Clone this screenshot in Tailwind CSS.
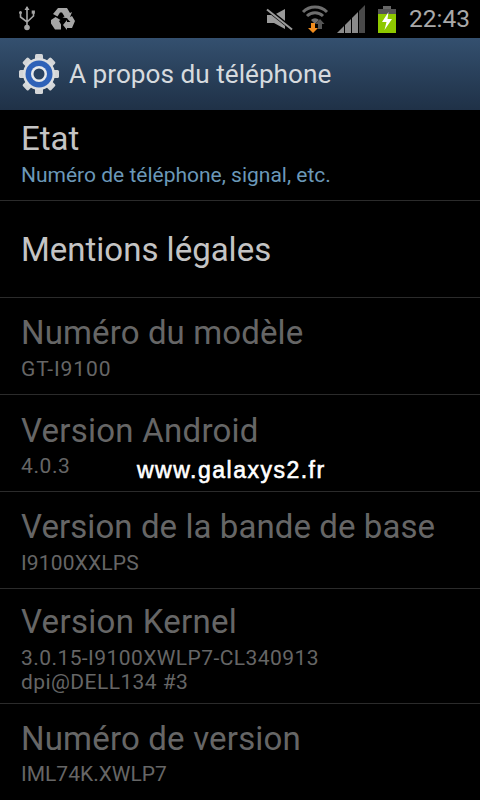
<!DOCTYPE html>
<html lang="fr">
<head>
    <meta charset="UTF-8">
    <title>A propos du téléphone</title>
    <script src="https://cdn.jsdelivr.net/npm/@tailwindcss/browser@4"></script>
</head>
<body class="relative w-[480px] h-[800px] overflow-hidden bg-black font-['Roboto',sans-serif]">

    <!-- Status bar -->
    <div class="h-[38px] flex items-center justify-between bg-black">
        <div class="flex items-center gap-[15px] pl-[19px]">
            <svg width="16" height="26" viewBox="0 0 16 26" fill="none" stroke="#a6a6a6" stroke-width="1.6">
                <path d="M8 1v20M1.5 7v4l6.5 5 6.5-6V7"/>
                <path d="M8 0l-2.5 4h5z" fill="#a6a6a6" stroke="none"/>
                <circle cx="8" cy="21.5" r="2.8" fill="#a6a6a6" stroke="none"/>
                <circle cx="1.5" cy="6.5" r="1.5" fill="#a6a6a6" stroke="none"/>
                <rect x="12.7" y="4.5" width="3.2" height="3.2" fill="#a6a6a6" stroke="none"/>
            </svg>
            <svg width="26" height="24" viewBox="0 0 26 24" fill="#a6a6a6">
                <path d="M8 1h9l3 5 2-1-2.500 6.500-7-1 2-1-2.500-4-2 0-2.500 4-4.500-2.500z"/>
                <path d="M1 13l4.500-3 5 3-1.500 1 2 3.500v5h-6l-4-6z"/>
                <path d="M25 14l-3-5-5 2.500 3.500 3.500-3.500 0v-2l-4 5 4 5v-2h5z"/>
            </svg>
        </div>
        <div class="flex items-center pr-[10px]">
            <svg class="mr-[7px]" width="28" height="24" viewBox="0 0 28 24">
                <path d="M1 8h7l11-6v20L8 16H1z" fill="#9a9a9a"/>
                <path d="M1 2l25 20" stroke="#000" stroke-width="4"/>
                <path d="M1 2.500l25 20" stroke="#9a9a9a" stroke-width="2"/>
            </svg>
            <svg class="mr-[8px]" width="28" height="30" viewBox="0 0 28 30" fill="none">
                <path d="M2 8a17 17 0 0 1 24 0" stroke="#6e6e6e" stroke-width="3"/>
                <path d="M6 12a11.500 11.500 0 0 1 16 0" stroke="#6e6e6e" stroke-width="3"/>
                <path d="M10 16a5.500 5.500 0 0 1 8 0l-4 4z" fill="#6e6e6e"/>
                <path d="M10 19h4v5h3l-5 5-5-5h3z" fill="#f08c1e"/>
                <path d="M19 15l4.500 5H21v5h-4v-5h-2.500z" fill="#555"/>
            </svg>
            <svg class="mr-[11px]" width="30" height="28" viewBox="0 0 30 28">
                <path d="M0 28L7 21V28z" fill="#8a8a8a"/>
                <path d="M8 20L14 14V28H8z" fill="#8a8a8a"/>
                <path d="M15 13L21 7V28H15z" fill="#8a8a8a"/>
                <path d="M22 6L28 0V28H22z" fill="#4a4a4a"/>
            </svg>
            <svg class="mr-[13px]" width="18" height="27" viewBox="0 0 18 27">
                <rect x="5" y="0" width="8" height="3" fill="#666"/>
                <rect x="0" y="3" width="18" height="5" fill="#555"/>
                <rect x="0" y="8" width="18" height="19" fill="#8ec800"/>
                <path d="M10.500 6L4 16h4.500L6.500 24 14 13H9.500z" fill="#fff"/>
            </svg>
            <span class="text-[24.500px] leading-none text-[#a9a9a9]">22:43</span>
        </div>
    </div>

    <!-- Action bar -->
    <div class="h-[72px] flex items-center pl-[18px] gap-[9px] bg-gradient-to-b from-[#34506f] to-[#1f3147]">
        <svg width="42" height="42" viewBox="0 0 42 42" class="shrink-0">
            <g fill="#d4d6d8">
                <rect x="17" y="1" width="8" height="40" rx="1.500"/>
                <rect x="17" y="1" width="8" height="40" rx="1.500" transform="rotate(45 21 21)"/>
                <rect x="17" y="1" width="8" height="40" rx="1.500" transform="rotate(90 21 21)"/>
                <rect x="17" y="1" width="8" height="40" rx="1.500" transform="rotate(135 21 21)"/>
            </g>
            <circle cx="21" cy="21" r="16" fill="#dcdee0"/>
            <circle cx="21" cy="21" r="13.500" fill="#2f62b8"/>
            <circle cx="21" cy="21" r="8" fill="#e8eaec"/>
            <circle cx="21" cy="21" r="5.500" fill="#2a4260"/>
        </svg>
        <span class="pt-[2px] text-[26.200px] text-[#d6dade] whitespace-nowrap">A propos du téléphone</span>
    </div>

    <!-- Settings list -->
    <ul class="text-[33px] leading-none">
        <li class="h-[91px] pl-[21px] pt-[13px] border-b border-[#2b2b2b]">
            <p class="text-[#c4c4c4] leading-[32px]">Etat</p>
            <p class="mt-[7px] text-[21px] leading-[26px] text-[#6b98b8]">Numéro de téléphone, signal, etc.</p>
        </li>
        <li class="h-[97px] pl-[21px] flex items-center border-b border-[#2b2b2b]">
            <p class="text-[#c4c4c4]">Mentions légales</p>
        </li>
        <li class="h-[97px] pl-[21px] pt-[19px] border-b border-[#2b2b2b]">
            <p class="text-[#666666] leading-[32px] tracking-[0.12px]">Numéro du modèle</p>
            <p class="mt-[8px] text-[21px] tracking-[0.9px] leading-[24px] text-[#666666]">GT-I9100</p>
        </li>
        <li class="h-[97px] pl-[21px] pt-[20px] border-b border-[#2b2b2b]">
            <p class="text-[#666666] leading-[32px] tracking-[0.25px]">Version Android</p>
            <p class="mt-[7px] text-[21px] tracking-[0.6px] leading-[24px] text-[#666666]">4.0.3</p>
        </li>
        <li class="h-[97px] pl-[21px] pt-[19px] border-b border-[#2b2b2b]">
            <p class="text-[#666666] leading-[32px] tracking-[0.08px]">Version de la bande de base</p>
            <p class="mt-[8px] text-[21px] tracking-[0.15px] leading-[24px] text-[#666666]">I9100XXLPS</p>
        </li>
        <li class="h-[115px] pl-[21px] pt-[17px] border-b border-[#2b2b2b]">
            <p class="text-[#666666] leading-[32px] tracking-[0.3px]">Version Kernel</p>
            <p class="mt-[8px] text-[21px] tracking-[0.43px] leading-[24px] text-[#666666]">3.0.15-I9100XWLP7-CL340913<br>dpi@DELL134 #3</p>
        </li>
        <li class="pl-[21px] pt-[19px]">
            <p class="text-[#666666] leading-[32px] tracking-[0.18px]">Numéro de version</p>
            <p class="mt-[7px] text-[21px] leading-[24px] text-[#666666]">IML74K.XWLP7</p>
        </li>
    </ul>

    <!-- Watermark -->
    <div class="absolute left-[137px] top-[456px] text-[23px] tracking-[1.5px] leading-[28px] font-['Liberation_Sans',sans-serif] [-webkit-text-stroke:0.6px_white] text-white whitespace-nowrap">www.galaxys2.fr</div>

</body>
</html>
